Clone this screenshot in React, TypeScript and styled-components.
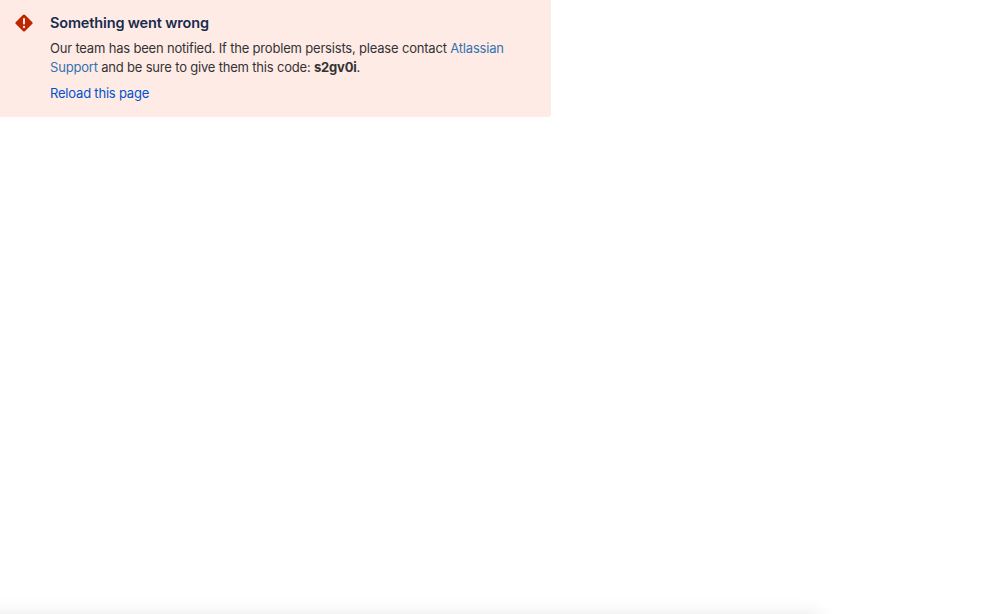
import * as React from "react";
import styled, { createGlobalStyle } from "styled-components";

const GlobalStyle = createGlobalStyle`
  html, body {
    margin: 0;
    padding: 0;
    height: 100%;
    background: #fff;
    overflow: hidden;
  }
  body {
    font-family: Inter, "Liberation Sans", sans-serif;
  }
`;

const Page = styled.div`
  position: relative;
  width: 999px;
  height: 614px;
  overflow: hidden;
`;

const Banner = styled.section`
  display: flex;
  gap: 17px;
  width: 551px;
  height: 117px;
  box-sizing: border-box;
  padding: 12px 16px 12px 15px;
  background: #ffebe6;
  border-bottom-right-radius: 3px;
`;

const IconSlot = styled.div`
  flex: none;
  width: 18px;
  height: 22px;
  display: flex;
  align-items: center;
  justify-content: center;
`;

const Body = styled.div`
  display: flex;
  flex-direction: column;
  color: #333;
`;

const Title = styled.h1`
  margin: 0;
  font-size: 14.5px;
  line-height: 22px;
  font-weight: 600;
  letter-spacing: -0.15px;
  color: #172b4d;
`;

const Message = styled.p`
  margin: 5px 0 0;
  width: 470px;
  font-size: 13px;
  line-height: 19px;
  letter-spacing: -0.19px;
`;

const SupportLink = styled.a`
  color: #3572b0;
  text-decoration: none;
`;

const Code = styled.strong`
  font-weight: 700;
`;

const Reload = styled.a`
  margin-top: 6px;
  font-size: 13px;
  line-height: 20px;
  letter-spacing: -0.2px;
  color: #0052cc;
  text-decoration: none;
`;

const BottomShadow = styled.div`
  position: absolute;
  left: -20px;
  bottom: -14px;
  width: 840px;
  height: 14px;
  box-shadow: 0 0 18px rgba(0, 0, 0, 0.1);
`;

function ErrorIcon() {
  return (
    <svg width="18" height="18" viewBox="0 0 18 18" aria-hidden="true">
      <path
        d="M7.9 0.9a1.6 1.6 0 0 1 2.2 0l7 7a1.6 1.6 0 0 1 0 2.2l-7 7a1.6 1.6 0 0 1-2.2 0l-7-7a1.6 1.6 0 0 1 0-2.2z"
        fill="#bf2600"
      />
      <rect x="8" y="4" width="2" height="6.5" rx="1" fill="#ffebe6" />
      <circle cx="9" cy="13" r="1.15" fill="#ffebe6" />
    </svg>
  );
}

export default function App() {
  return (
    <Page>
      <GlobalStyle />
      <Banner>
        <IconSlot>
          <ErrorIcon />
        </IconSlot>
        <Body>
          <Title>Something went wrong</Title>
          <Message>
            Our team has been notified. If the problem persists, please contact{" "}
            <SupportLink href="#">Atlassian Support</SupportLink> and be sure to
            give them this code: <Code>s2gv0i</Code>.
          </Message>
          <Reload href="#">Reload this page</Reload>
        </Body>
      </Banner>
      <BottomShadow />
    </Page>
  );
}
